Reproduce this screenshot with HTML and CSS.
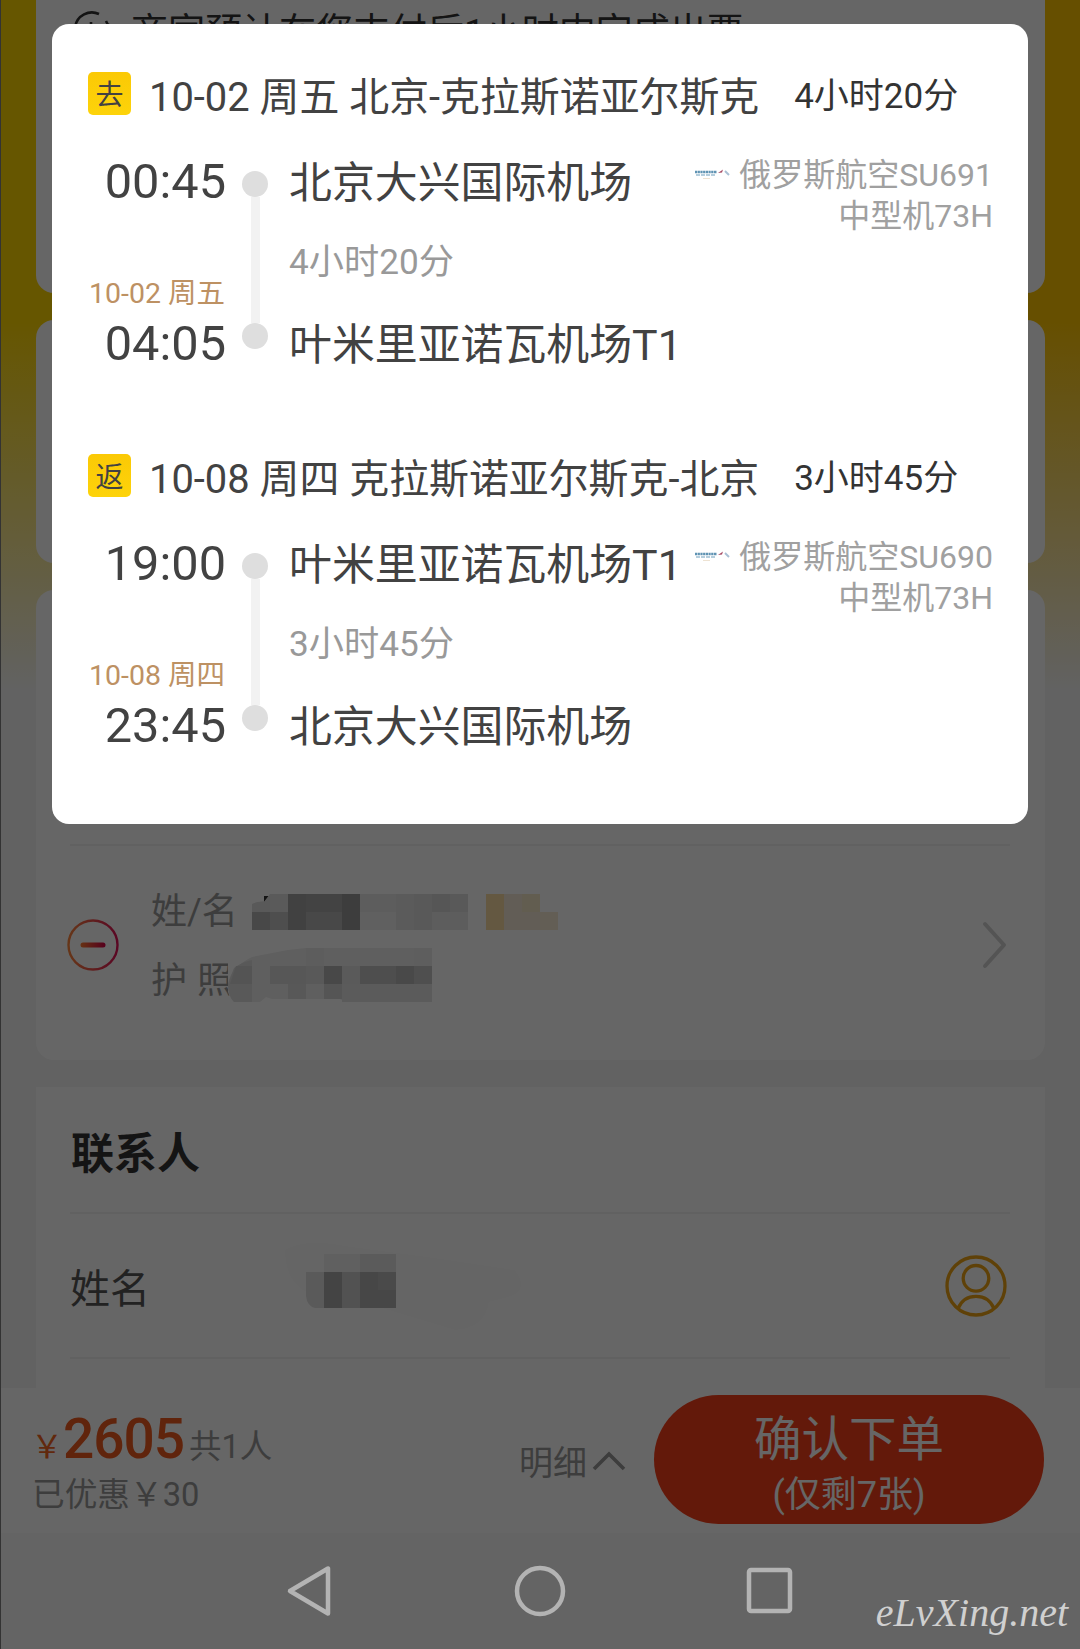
FILE: index.html
```html
<!DOCTYPE html>
<html lang="zh-CN">
<head>
<meta charset="utf-8">
<title>确认下单</title>
<link rel="stylesheet" href="styles.css">
</head>
<body>
<div class="screen">
  <main class="page">
    <section class="card card-notice">
      <svg class="notice-icon" width="38" height="38" viewBox="0 0 38 38" fill="none" stroke="#333" stroke-width="2.600"><path d="M26 4A17 17 0 1 0 35 14"/><path d="M18 12v9l7 4M33 11l2 4"/></svg>
      <span>商家预计在您支付后1小时内完成出票</span>
    </section>
    <section class="card card-blank"></section>
    <section class="card card-passenger">
      <div class="passenger">
        <svg class="remove" width="52" height="52" viewBox="0 0 52 52" fill="none">
          <defs><linearGradient id="rm" gradientUnits="userSpaceOnUse" x1="0" y1="0" x2="52" y2="0"><stop offset="0" stop-color="#ff8a3c"/><stop offset="1" stop-color="#e0105a"/></linearGradient>
          <linearGradient id="rm2" gradientUnits="userSpaceOnUse" x1="14" y1="0" x2="38" y2="0"><stop offset="0" stop-color="#ff7a30"/><stop offset="1" stop-color="#d80048"/></linearGradient></defs>
          <circle cx="26" cy="26" r="24.5" stroke="url(#rm)" stroke-width="2.4"/>
          <path d="M16 26h20" stroke="url(#rm2)" stroke-width="5" stroke-linecap="round"/>
        </svg>
        <div class="fields">
          <div>姓/名</div>
          <div class="passport">护 照</div>
        </div>
        <svg class="chevron" width="26" height="50" viewBox="0 0 26 50" fill="none" stroke="#d2d2d2" stroke-width="4" stroke-linecap="round" stroke-linejoin="round"><path d="M3 4l19 21L3 46"/></svg>
        <svg class="mosaic" width="420" height="130" viewBox="0 0 420 130">
          <path d="M30 18Q150 2 300 0Q330 8 390 20Q430 36 390 52L330 60Q360 70 374 88Q374 110 350 108L210 114L20 90z" fill="#fefefe"/>
          <g transform="translate(24 20)">
            <path d="M0 36V10L15 6L20 0H36V36z" fill="#e8e8e8"/><path d="M12 2h5l-5 6z" fill="#333"/>
            <path d="M0 18h18v18H0z" fill="#b4b4b4"/><path d="M0 18V10q6-3 12-2l6-8v18z" fill="#dedede"/>
            <path d="M18 0h18v18H18z" fill="#e2e2e2"/><path d="M18 18h18v18H18z" fill="#c4c4c4"/>
            <path d="M36 0h18v36H36z" fill="#a2a2a2"/><path d="M54 0h36v18H54z" fill="#a9a9a9"/><path d="M54 18h36v18H54z" fill="#b4b4b4"/>
            <path d="M90 0h18v36H90z" fill="#999"/>
            <path d="M108 0h36v18h-36z" fill="#e9e9e9"/><path d="M108 18h36v18h-36z" fill="#f0f0f0"/>
            <path d="M144 0h18v36h-18z" fill="#e4e4e4"/><path d="M162 0h18v36h-18z" fill="#dedede"/>
            <path d="M180 0h36v18h-36z" fill="#d8d8d8"/><path d="M180 18h36v18h-36z" fill="#e8e8e8"/><path d="M198 0h18v18h-18z" fill="#dfdfdf"/>
            <path d="M234 0h18v36h-18z" fill="#fadba4"/><path d="M252 0h36v36h-36z" fill="#f4e9d6"/><path d="M270 0h18v18h-18z" fill="#f6e8c8"/><path d="M288 18h18v18h-18z" fill="#f7ebd4"/>
          </g>
          <path d="M-2 93Q6 75 35 69L74 74H204V128H150L145 125H40L36 123L32 128H4Q-4 112-2 93z" fill="#fff"/>
          <path d="M0 110Q2 94 24 83L60 76L78 74H204V128H118L112 125H44L38 123L32 128H6Q0 122 0 110z" fill="#ededed"/>
          <path d="M6 94Q14 88 24 86V128H6Q0 122 0 110z" fill="#dedede"/><path d="M8 92h16v18H2z" fill="#d2d2d2"/>
          <path d="M42 92h36v18H42z" fill="#d9d9d9"/><path d="M60 110h18v15H60z" fill="#dcdcdc"/><path d="M78 74h18v18H78z" fill="#e8e8e8"/><path d="M78 92h18v18H78z" fill="#dedede"/>
          <path d="M96 92h18v18H96z" fill="#b4b4b4"/><path d="M96 110h18v15H96z" fill="#d4d4d4"/><path d="M114 92h18v18h-18z" fill="#e2e2e2"/>
          <path d="M132 92h36v18h-36z" fill="#c2c2c2"/><path d="M168 92h18v18h-18z" fill="#b6b6b6"/><path d="M186 92h18v18h-18z" fill="#c6c6c6"/>
          <path d="M114 110h90v18h-90z" fill="#e3e3e3"/><path d="M186 74h18v18h-18z" fill="#eaeaea"/>
        </svg>
      </div>
    </section>
    <section class="card card-contact">
      <h2>联系人</h2>
      <div class="contact-row">
        <span class="label">姓名</span>
        <svg class="name-mosaic" width="240" height="90" viewBox="0 0 240 90">
          <path d="M0 8Q20 -4 60 4L150 16L230 28Q246 50 220 56L204 60Q200 86 170 88L90 64L40 56Q0 50 0 8z" fill="#fdfdfd"/>
          <path d="M21 30h18v36H30q-8-2-9-12z" fill="#e2e2e2"/>
          <path d="M39 12h36v18H39z" fill="#f0f0f0"/><path d="M75 12h36v18H75z" fill="#e3e3e3"/>
          <path d="M39 30h18v36H39z" fill="#aaa"/><path d="M57 30h18v36H57z" fill="#ccc"/><path d="M75 30h36v36H75z" fill="#b1b1b1"/><path d="M93 30h18v18H93z" fill="#bababa"/>
        </svg>
        <svg class="person" width="64" height="64" viewBox="0 0 64 64" fill="none" stroke="#eda414" stroke-width="3.300"><circle cx="32" cy="32" r="29"/><circle cx="32" cy="24.3" r="12.8"/><path d="M14 54.500C18 45 25 42.300 32 42.300S46 45 50 54.500"/></svg>
      </div>
    </section>
    <footer class="order-bar">
      <div class="price">
        <div class="total"><span class="yen">￥</span><span class="amount">2605</span><span class="count">共1人</span></div>
        <div class="saved">已优惠￥30</div>
      </div>
      <div class="detail">明细<svg width="34" height="22" viewBox="0 0 34 22" fill="none" stroke="#999" stroke-width="3.600"><path d="M2 19L17 4L32 19"/></svg></div>
      <div class="submit"><span class="submit-main">确认下单</span><span class="submit-sub">(仅剩7张)</span></div>
    </footer>
  </main>

  <div class="overlay">
    <div class="modal">
      <section class="leg">
        <header><span class="badge">去</span><span class="route">10-02 周五 北京-克拉斯诺亚尔斯克</span><span class="length">4小时20分</span></header>
        <div class="leg-body">
          <div class="times"><span class="time">00:45</span><span class="date">10-02 周五</span><span class="time">04:05</span></div>
          <div class="rail"><i></i><b></b><i></i></div>
          <div class="stations"><span>北京大兴国际机场</span><small>4小时20分</small><span>叶米里亚诺瓦机场T1</span></div>
          <div class="airline">
            <div><svg width="36" height="14" viewBox="0 0 36 14"><path d="M1 4h22" stroke="#5f93b3" stroke-width="2.500" stroke-dasharray="2.200 .5"/><path d="M2 7h20" stroke="#9dbfd2" stroke-width="1.300" stroke-dasharray="4 1"/><path d="M24 5l5-3.500-1 3z" fill="#a54862"/><path d="M31 3l4 4" stroke="#a9bfd4" stroke-width="2"/><path d="M9 10.500h7" stroke="#eee3d3"/></svg>俄罗斯航空SU691</div>
            <div>中型机73H</div>
          </div>
        </div>
      </section>
      <section class="leg">
        <header><span class="badge">返</span><span class="route">10-08 周四 克拉斯诺亚尔斯克-北京</span><span class="length">3小时45分</span></header>
        <div class="leg-body">
          <div class="times"><span class="time">19:00</span><span class="date">10-08 周四</span><span class="time">23:45</span></div>
          <div class="rail"><i></i><b></b><i></i></div>
          <div class="stations"><span>叶米里亚诺瓦机场T1</span><small>3小时45分</small><span>北京大兴国际机场</span></div>
          <div class="airline">
            <div><svg width="36" height="14" viewBox="0 0 36 14"><path d="M1 4h22" stroke="#5f93b3" stroke-width="2.500" stroke-dasharray="2.200 .5"/><path d="M2 7h20" stroke="#9dbfd2" stroke-width="1.300" stroke-dasharray="4 1"/><path d="M24 5l5-3.500-1 3z" fill="#a54862"/><path d="M31 3l4 4" stroke="#a9bfd4" stroke-width="2"/><path d="M9 10.500h7" stroke="#eee3d3"/></svg>俄罗斯航空SU690</div>
            <div>中型机73H</div>
          </div>
        </div>
      </section>
    </div>
    <nav class="system-nav">
      <svg width="52" height="54" viewBox="0 0 52 54"><path d="M6 27L44 4.500V49.500z"/></svg>
      <svg width="54" height="54" viewBox="0 0 54 54"><circle cx="27" cy="27" r="23"/></svg>
      <svg width="52" height="54" viewBox="0 0 52 54"><rect x="5" y="6" width="41" height="41" rx="2"/></svg>
    </nav>
    <div class="watermark">eLvXing.net</div>
  </div>
</div>
</body>
</html>
```
FILE: styles.css
```css
* { box-sizing: border-box; }
body {
  margin: 0;
  font-family: Roboto, "Noto Sans CJK SC", sans-serif;
  color: #333;
}
svg { display: block; flex: none; }
.screen {
  position: relative;
  width: 1080px;
  height: 1649px;
  overflow: hidden;
  white-space: nowrap;
}
.page {
  display: flex;
  flex-direction: column;
  height: 100%;
  background:
    linear-gradient(to bottom, rgba(245, 245, 245, 0) 320px, #f5f5f5 690px),
    linear-gradient(to right, #ffd700, #ffc500);
}
.card {
  margin: 0 35px 27px 36px;
  border-radius: 18px;
  background: #fff;
}
.card-notice {
  display: flex;
  align-items: flex-start;
  height: 293px;
  padding: 10px 0 0 37px;
  border-radius: 0 0 18px 18px;
  font-size: 37px;
  line-height: 45px;
}
.notice-icon { margin-right: 20px; }
.card-blank { height: 243px; }
.card-passenger {
  height: 470px;
  padding: 254px 35px 0 34px;
}
.passenger {
  position: relative;
  display: flex;
  align-items: center;
  height: 200px;
  border-top: 2px solid #f3f3f3;
}
.remove { margin-left: -3px; }
.fields {
  flex: 1;
  margin-left: 32px;
  padding-top: 3px;
  font-size: 36px;
  line-height: 69px;
  color: #999;
}
.passport { word-spacing: 1px; }
.chevron { margin-right: 2px; }
.mosaic {
  position: absolute;
  left: 158px;
  top: 28px;
}
.card-contact {
  flex: none;
  height: 301px;
  margin-bottom: 0;
  padding: 0 35px 0 34px;
  border-radius: 0;
}
h2 {
  margin: 0;
  height: 125px;
  padding-left: 1px;
  font-size: 43px;
  line-height: 134px;
}
.contact-row {
  display: flex;
  align-items: center;
  height: 147px;
  border-top: 2px solid #f3f3f3;
  border-bottom: 2px solid #f3f3f3;
}
.label {
  width: 215px;
  font-size: 40px;
  color: #555;
}
.name-mosaic { margin-top: 2px; }
.person { margin-left: auto; margin-right: 2px; }
.order-bar {
  display: flex;
  flex: none;
  height: 261px;
  padding: 7px 36px 0 31px;
  background: linear-gradient(to bottom, #fff 145px, #fafafa 145px);
}
.price { width: 488px; }
.total {
  display: flex;
  align-items: baseline;
  height: 78px;
  line-height: 88px;
}
.yen { font-size: 32px; color: #f26522; }
.amount { font-size: 55px; font-weight: 500; color: #f05a1e; letter-spacing: -1px; }
.count { margin-left: 5px; font-size: 32.500px; color: #999; }
.saved {
  padding-left: 1px;
  font-size: 32.700px;
  line-height: 44px;
  color: #999;
}
.detail {
  display: flex;
  align-items: center;
  gap: 5px;
  height: 131px;
  font-size: 34px;
  color: #999;
}
.submit {
  display: flex;
  flex-direction: column;
  align-items: center;
  width: 390px;
  height: 129px;
  margin-left: auto;
  padding-top: 17px;
  border-radius: 65px;
  background: #f83f19;
  color: #fff;
}
.submit-main { font-size: 47.500px; line-height: 56px; }
.submit-sub { font-size: 36px; line-height: 54px; }

/* Dimmed layer with the itinerary card and system keys */
.overlay {
  position: absolute;
  inset: 0;
  padding: 24px 51px 0;
  border-left: 1px solid #333;
  background: rgba(0, 0, 0, .6);
}
.modal {
  width: 976px;
  height: 800px;
  padding: 48px 36px 0;
  border-radius: 17px;
  background: #fff;
  color: #424242;
}
.leg { height: 382px; }
.leg header {
  display: flex;
  align-items: center;
  height: 43px;
}
.badge {
  width: 43px;
  height: 43px;
  border-radius: 5px;
  background: linear-gradient(to bottom, #fbc905, #fdd30a);
  font-size: 28px;
  line-height: 47px;
  text-align: center;
}
.route { margin-left: 18px; font-size: 39.900px; }
.length { margin: -3px 0 0 35px; font-size: 35px; color: #333; }
.leg-body { display: flex; margin-top: 46px; height: 203px; }
.times {
  display: flex;
  flex-direction: column;
  align-items: flex-end;
  width: 138px;
}
.time { font-size: 48.700px; line-height: 41px; }
.date {
  margin: auto 1px 14px 0;
  font-size: 28.500px;
  line-height: 30px;
  color: #bd9163;
}
.rail {
  display: flex;
  flex-direction: column;
  align-items: center;
  width: 26px;
  height: 178px;
  margin: 10px 20px 0 16px;
}
.rail i { width: 26px; height: 26px; border-radius: 50%; background: #dedede; }
.rail b { flex: 1; width: 9px; background: #f2f2f2; }
.stations {
  display: flex;
  flex-direction: column;
  justify-content: space-between;
  margin: 2px 0 -2px 1px;
  font-size: 42.900px;
  line-height: 41px;
}
.stations small { margin-top: -4px; font-size: 35.200px; color: #999; }
.airline {
  margin: -6px -1px 0 auto;
  font-size: 32px;
  line-height: 40.500px;
  text-align: right;
  color: #a0a0a0;
}
.airline div:first-child {
  display: flex;
  align-items: center;
  justify-content: flex-end;
  gap: 9px;
}
.system-nav {
  position: absolute;
  left: 283px;
  top: 1564px;
  display: flex;
  justify-content: space-between;
  width: 512px;
}
.system-nav svg { fill: none; stroke: #b3b3b3; stroke-width: 4.500; stroke-linejoin: round; }
.watermark {
  position: absolute;
  right: 12px;
  top: 1591px;
  font: italic 500 40px/44px "Liberation Serif", serif;
  color: #d0d0d0;
}
```
